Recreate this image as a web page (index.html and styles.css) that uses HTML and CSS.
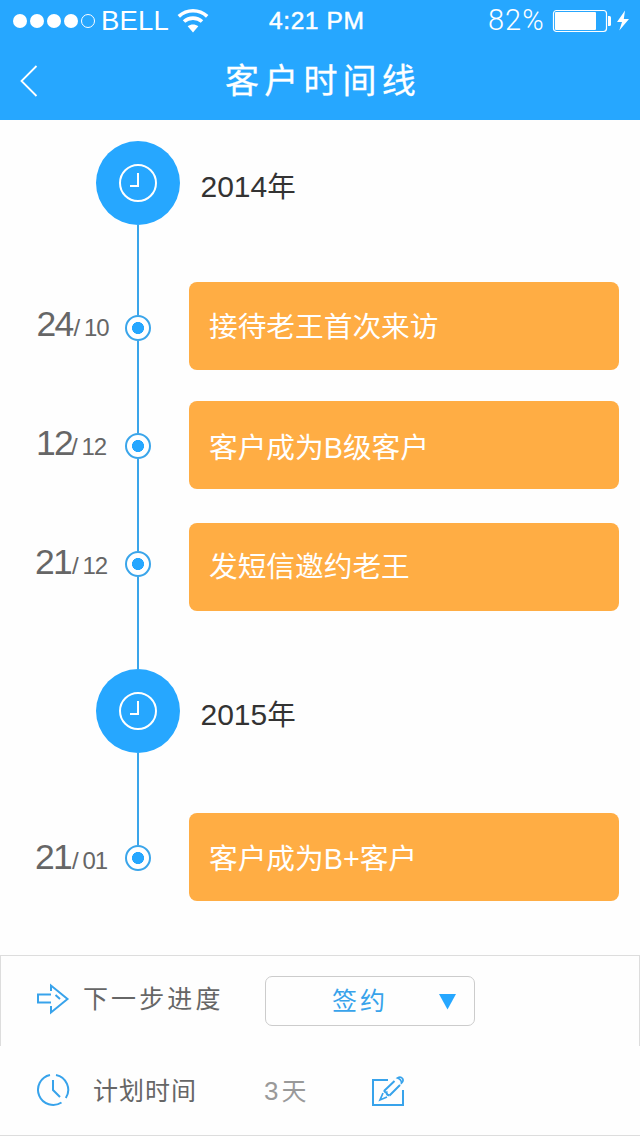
FILE: index.html
```html
<!DOCTYPE html>
<html lang="zh-CN">
<head>
<meta charset="utf-8">
<title>客户时间线</title>
<link rel="stylesheet" href="styles.css">
</head>
<body>
<header class="header">
  <div class="status">
    <div class="status-left">
      <svg class="signal" width="84" height="16" viewBox="0 0 84 16">
        <g fill="#fff"><circle cx="8" cy="8" r="7"/><circle cx="25" cy="8" r="7"/><circle cx="42" cy="8" r="7"/><circle cx="59" cy="8" r="7"/></g>
        <circle cx="76" cy="8" r="6.5" fill="none" stroke="#fff"/>
      </svg>
      <span class="carrier">BELL</span>
      <svg class="wifi" width="32" height="26" viewBox="0 0 32 26">
        <g fill="none" stroke="#fff" stroke-width="3.6"><path d="M1.8 9.300C10 1.900 22 1.900 30.2 9.300"/><path d="M7 14.500C12 10 20 10 25 14.500"/></g>
        <path d="M10.7 19.200C13.8 16.800 18.2 16.800 21.3 19.200L16 25.500Z" fill="#fff"/>
      </svg>
    </div>
    <div class="clock">4:21 PM</div>
    <div class="status-right">
      <span class="percent">82%</span>
      <svg class="battery" width="78" height="24" viewBox="0 0 78 24">
        <rect x="1.5" y="1.5" width="53" height="21" rx="3" fill="none" stroke="#fff" stroke-width="1.2"/>
        <rect x="3" y="3" width="41" height="18" rx="1" fill="#fff"/>
        <path d="M56 7h1.5q1.5 0 1.5 1.5v7q0 1.500-1.500 1.500H56z" fill="#fff"/>
        <path d="M73 1.500L65 13h5L67.300 21.500L77 10h-5.200z" fill="#fff"/>
      </svg>
    </div>
  </div>
  <div class="navbar">
    <svg class="back" width="18" height="32" viewBox="0 0 18 32"><path d="M16.500 1L1.500 16L16.500 31" fill="none" stroke="#fff" stroke-width="1.8"/></svg>
    <h1 class="title">客户时间线</h1>
  </div>
</header>

<main class="timeline">
  <section class="year">
    <svg class="year-icon" width="84" height="84" viewBox="0 0 84 84"><circle cx="42" cy="42" r="42" fill="#26a7ff"/><circle cx="42" cy="42" r="18" fill="none" stroke="#fff" stroke-width="2"/><path d="M42 32v13h-8" fill="none" stroke="#fff" stroke-width="2"/></svg>
    <h2 class="year-text">2014<span class="year-unit">年</span></h2>
  </section>
  <article class="event first">
    <time class="date"><span class="day">24</span><span class="slash">/</span><span class="month">10</span></time>
    <div class="axis"><i class="line before"></i><i class="dot"></i><i class="line after"></i></div>
    <div class="card">接待老王首次来访</div>
  </article>
  <article class="event second">
    <time class="date"><span class="day">12</span><span class="slash">/</span><span class="month">12</span></time>
    <div class="axis"><i class="line before"></i><i class="dot"></i><i class="line after"></i></div>
    <div class="card">客户成为B级客户</div>
  </article>
  <article class="event third">
    <time class="date"><span class="day">21</span><span class="slash">/</span><span class="month">12</span></time>
    <div class="axis"><i class="line before"></i><i class="dot"></i><i class="line after"></i></div>
    <div class="card">发短信邀约老王</div>
  </article>
  <section class="year">
    <svg class="year-icon" width="84" height="84" viewBox="0 0 84 84"><circle cx="42" cy="42" r="42" fill="#26a7ff"/><circle cx="42" cy="42" r="18" fill="none" stroke="#fff" stroke-width="2"/><path d="M42 32v13h-8" fill="none" stroke="#fff" stroke-width="2"/></svg>
    <h2 class="year-text">2015<span class="year-unit">年</span></h2>
  </section>
  <article class="event last">
    <time class="date"><span class="day">21</span><span class="slash">/</span><span class="month">01</span></time>
    <div class="axis"><i class="line before"></i><i class="dot"></i></div>
    <div class="card">客户成为B+客户</div>
  </article>
</main>

<footer class="panel">
  <div class="row next">
    <svg class="icon" width="34" height="32" viewBox="0 0 34 32"><path d="M15 11.500H2v8H15M15 8V2.500L31.500 16L15 29.500V23M19.500 12l4.500 4" fill="none" stroke="#38a3eb" stroke-width="2"/></svg>
    <span class="label next-label">下一步进度</span>
    <div class="select"><span class="select-text">签约</span><svg class="caret" width="17" height="16" viewBox="0 0 17 16"><path d="M0 0h17L8.500 15.500z" fill="#26a7ff"/></svg></div>
  </div>
  <div class="row plan">
    <svg class="icon" width="34" height="34" viewBox="0 0 34 34"><path d="M14 1.900A15.200 15.200 0 1 0 25.500 29.500M20 1.900A15.200 15.200 0 0 1 29.800 25M17 7v10l7 7" fill="none" stroke="#38a3eb" stroke-width="2"/></svg>
    <span class="label plan-label">计划时间</span>
    <span class="value"><span class="count">3</span>天</span>
    <svg class="edit" width="34" height="32" viewBox="0 0 34 32"><g fill="none" stroke="#38a3eb" stroke-width="2"><path d="M17 5H2v25h30V15"/><path d="M23.500 6L13 16M29 10L18.500 20.500"/><path d="M13 15.500Q14.500 18 15.500 17.500Q15.500 20 18.500 20.500"/><path d="M12 18L9 25L16 22" stroke-width="1.700"/><path d="M26.500 3Q29.500 1 31.500 3.500Q33 6 30.500 8Q30.500 4.500 26.500 3Z" stroke-width="1.700"/></g></svg>
  </div>
</footer>
</body>
</html>
```
FILE: styles.css
```css
* { box-sizing: border-box; }
body {
  margin: 0;
  width: 640px;
  height: 1136px;
  overflow: hidden;
  background: #fefefe;
  font-family: "Liberation Sans", "Noto Sans CJK SC", sans-serif;
}
h1, h2 { margin: 0; font-weight: 400; }
svg { display: block; flex: none; }
.header { height: 120px; background: #26a7ff; color: #fff; }
.status { display: flex; height: 42px; line-height: 42px; white-space: nowrap; }
.status-left { display: flex; width: 269px; padding-left: 12px; }
.signal { margin-top: 13px; }
.carrier { width: 66px; margin-left: 5px; font-size: 27.500px; line-height: 42px; letter-spacing: .2px; }
.wifi { margin: 7px 0 0 10px; }
.clock { width: 219px; font-size: 24.500px; line-height: 42px; letter-spacing: .6px; -webkit-text-stroke: .5px #fff; }
.status-right { display: flex; }
.percent { width: 64px; font: 300 29px/41px Roboto, sans-serif; letter-spacing: 1px; }
.battery { margin-top: 9px; }
.navbar { display: flex; height: 78px; padding-left: 20px; }
.back { margin-top: 23px; }
.title { margin-left: 187px; font-size: 34px; line-height: 78px; letter-spacing: 5.200px; -webkit-text-stroke: .3px #fff; }

.timeline { height: 835px; padding-top: 21px; }
.year { display: flex; height: 84px; padding-left: 96px; }
.year-text { margin-left: 20.500px; color: #333; font-size: 30px; line-height: 92px; }
.year-unit { font-size: 28.500px; }
.event { display: grid; grid-template-columns: 125px 26px 38px 430px; }
.first { height: 162px; --rise: 90px; --card-top: 57px; }
.second { height: 118px; --rise: 46px; --card-top: 14px; }
.third { height: 164px; --rise: 46px; --card-top: 18px; }
.last { height: 148px; --rise: 92px; --card-top: 60px; }
.date { display: flex; align-items: baseline; height: 44px; padding-left: 35px; margin-top: calc(var(--card-top) + 20px); color: #666; line-height: 44px; }
.first .date { padding-left: 36.500px; }
.second .date { padding-left: 36px; }
.third .date { margin-top: 35px; }
.last .date { margin-top: 82px; }
.day { width: 37px; font-size: 35.500px; letter-spacing: -1.800px; }
.second .day { width: 35px; }
.slash { width: 10.500px; font-size: 24px; }
.month { font-size: 24px; letter-spacing: -1px; }
.axis { display: flex; flex-direction: column; align-items: center; }
.line { width: 2px; background: #3aa5ea; }
.before { height: var(--rise); }
.after { flex: 1; }
.dot { flex: none; width: 26px; height: 26px; border: 2px solid #3aa5ea; border-radius: 50%; background: radial-gradient(circle, #26a7ff 5.700px, #fff 6.300px); }
.card { grid-column: 4; height: 88px; margin-top: var(--card-top); padding-left: 20px; border-radius: 8px; background: #ffad44; color: #fff; font-size: 28.700px; line-height: 90px; }
.second .card { line-height: 94px; }
.third .card { line-height: 88px; }
.last .card { line-height: 92px; }

.panel { height: 181px; border-top: 1px solid #ddd; border-bottom: 1px solid #ddd; }
.row { display: flex; height: 90px; padding-left: 36px; }
.next { padding-left: 35px; border-left: 1px solid #ddd; border-right: 1px solid #ddd; }
.next .icon { margin-top: 27px; }
.label { color: #666; font-size: 25px; line-height: 86px; white-space: nowrap; }
.next-label { width: 182px; margin-left: 13px; letter-spacing: 3.100px; }
.select { display: flex; width: 210px; height: 50px; margin-top: 20px; padding-left: 66px; border: 1px solid #ccc; border-radius: 7px; color: #38a3eb; font-size: 25px; line-height: 48px; letter-spacing: 3px; }
.select-text { width: 107px; }
.caret { margin-top: 17px; }
.plan .icon { margin-top: 27px; }
.plan-label { width: 171px; margin-left: 23px; letter-spacing: 1px; line-height: 90px; }
.value { width: 107px; color: #999; font-size: 25px; line-height: 90px; }
.count { margin-right: 3px; font-size: 26px; }
.edit { margin-top: 29px; }
```
